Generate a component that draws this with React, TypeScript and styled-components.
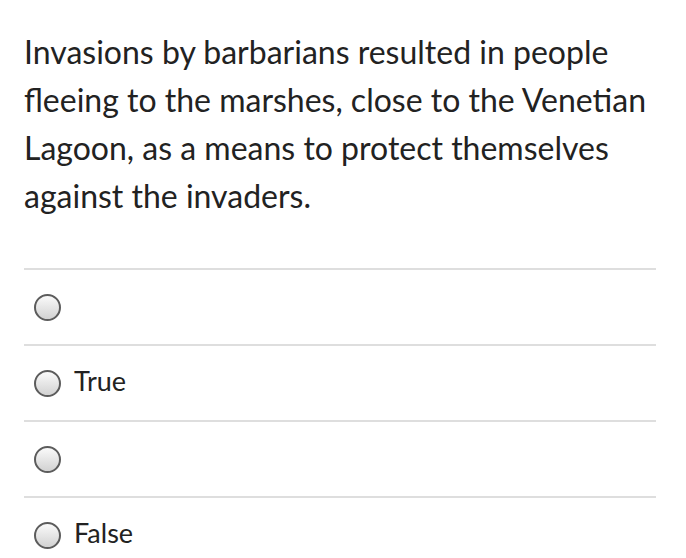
import styled, { createGlobalStyle } from 'styled-components';

const GlobalStyle = createGlobalStyle`
  body {
    margin: 0;
    background: #fff;
  }
`;

const options = ['', 'True', '', 'False'];

export default function App() {
  return (
    <>
      <GlobalStyle />
      <Question>
        <Prompt>
          Invasions by barbarians resulted in people fleeing to the marshes, close to the Venetian
          Lagoon, as a means to protect themselves against the invaders.
        </Prompt>
        <Answers>
          {options.map((label, i) => (
            <Answer key={i}>
              <Radio />
              {label && <Label>{label}</Label>}
            </Answer>
          ))}
        </Answers>
      </Question>
    </>
  );
}

const Question = styled.div`
  padding: 28px 30px 0 24px;
  font-family: Lato, 'Open Sans', sans-serif;
  color: #222;
`;

const Prompt = styled.p`
  margin: 0;
  width: 634px;
  font-size: 32px;
  line-height: 48px;
`;

const Answers = styled.div`
  margin-top: 48px;
`;

const Answer = styled.div`
  height: 74px;
  border-top: 2px solid #dedede;

  display: flex;
  align-items: center;
  gap: 13px;
  padding-left: 10px;
`;

const Radio = styled.span`
  width: 27px;
  height: 27px;
  box-sizing: border-box;
  border: 2px solid #5c5c5c;
  border-radius: 50%;
  background: linear-gradient(#fafafa, #d2d2d2);
`;

const Label = styled.span`
  font-size: 27px;
  margin-bottom: 6px;
`;
